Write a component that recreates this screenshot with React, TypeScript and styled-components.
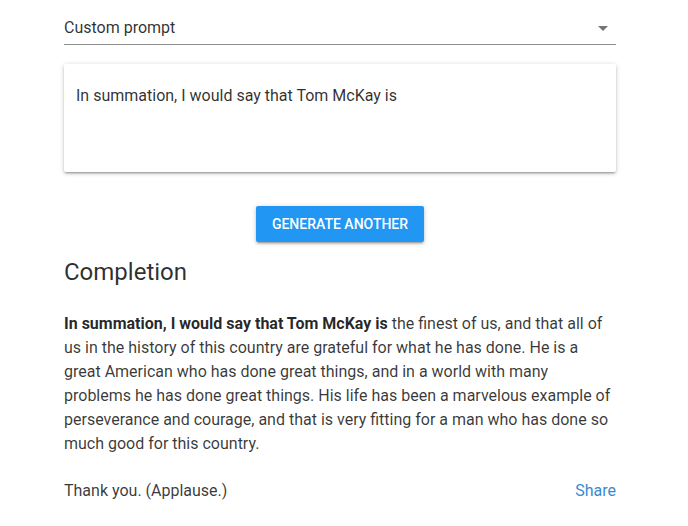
import React from "react";
import styled, { createGlobalStyle } from "styled-components";

const Global = createGlobalStyle`
  html, body { margin: 0; padding: 0; background: #fff; }
  body { font-family: Roboto, "Noto Sans", Arial, sans-serif; color: rgba(0,0,0,0.8); }
`;

const Page = styled.div`
  width: 552px;
  margin-left: 64px;
  padding-top: 14px;
  display: flex;
  flex-direction: column;
`;

const SelectBox = styled.div`
  display: flex;
  align-items: center;
  justify-content: space-between;
  box-sizing: border-box;
  height: 31px;
  padding-bottom: 4px;
  border-bottom: 1px solid #8c8c8c;
  font-size: 16px;
  color: rgba(0,0,0,0.82);
`;

const Arrow = styled.span`
  width: 0;
  height: 0;
  margin-right: 8px;
  margin-top: 2px;
  border-left: 5px solid transparent;
  border-right: 5px solid transparent;
  border-top: 5px solid #757575;
`;

const Card = styled.div`
  margin-top: 19px;
  height: 108px;
  box-sizing: border-box;
  padding: 20px 12px;
  background: #fff;
  box-shadow: 0 2px 2px 0 rgba(0,0,0,0.14), 0 3px 1px -2px rgba(0,0,0,0.12), 0 1px 5px 0 rgba(0,0,0,0.2);
  border-radius: 2px;
  font-size: 16px;
  line-height: 24px;
  color: rgba(0,0,0,0.82);
`;

const ButtonRow = styled.div`
  display: flex;
  justify-content: center;
  margin-top: 34px;
`;

const Button = styled.button`
  height: 36px;
  padding: 0 16px;
  border: none;
  border-radius: 2px;
  background: #2196f3;
  color: #fff;
  font-family: Roboto, sans-serif;
  font-size: 14px;
  font-weight: 500;
  text-transform: uppercase;
  box-shadow: 0 2px 2px 0 rgba(0,0,0,0.14), 0 3px 1px -2px rgba(0,0,0,0.12), 0 1px 5px 0 rgba(0,0,0,0.2);
  cursor: pointer;
`;

const Heading = styled.h2`
  margin: 14px 0 0;
  font-size: 24px;
  font-weight: 400;
  line-height: 32px;
  color: rgba(0,0,0,0.82);
`;

const Paragraph = styled.p`
  margin: 24px 0 0;
  font-size: 16px;
  line-height: 24px;
  color: rgba(0,0,0,0.78);
  b { font-weight: 700; color: rgba(0,0,0,0.85); }
`;

const Footer = styled.div`
  display: flex;
  justify-content: space-between;
  align-items: baseline;
  margin-top: 23px;
  font-size: 16px;
  line-height: 24px;
  color: rgba(0,0,0,0.78);
`;

const ShareLink = styled.a`
  color: #3a8ad0;
  text-decoration: none;
  cursor: pointer;
`;

export default function App() {
  return (
    <>
      <Global />
      <Page>
        <SelectBox>
          <span>Custom prompt</span>
          <Arrow />
        </SelectBox>
        <Card>In summation, I would say that Tom McKay is</Card>
        <ButtonRow>
          <Button>Generate another</Button>
        </ButtonRow>
        <Heading>Completion</Heading>
        <Paragraph>
          <b>In summation, I would say that Tom McKay is</b> the finest of us, and that all of
          us in the history of this country are grateful for what he has done. He is a
          great American who has done great things, and in a world with many
          problems he has done great things. His life has been a marvelous example of
          perseverance and courage, and that is very fitting for a man who has done so
          much good for this country.
        </Paragraph>
        <Footer>
          <span>Thank you. (Applause.)</span>
          <ShareLink>Share</ShareLink>
        </Footer>
      </Page>
    </>
  );
}
